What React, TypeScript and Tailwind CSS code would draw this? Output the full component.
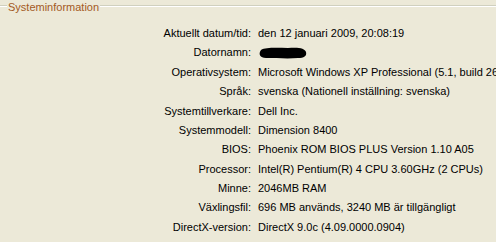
import React from 'react';

const rows: [string, string | null][] = [
  ['Aktuellt datum/tid:', 'den 12 januari 2009, 20:08:19'],
  ['Datornamn:', null],
  ['Operativsystem:', 'Microsoft Windows XP Professional (5.1, build 2600)'],
  ['Språk:', 'svenska (Nationell inställning: svenska)'],
  ['Systemtillverkare:', 'Dell Inc.'],
  ['Systemmodell:', 'Dimension 8400'],
  ['BIOS:', 'Phoenix ROM BIOS PLUS Version 1.10 A05'],
  ['Processor:', 'Intel(R) Pentium(R) 4 CPU 3.60GHz (2 CPUs)'],
  ['Minne:', '2046MB RAM'],
  ['Växlingsfil:', '696 MB används, 3240 MB är tillgängligt'],
  ['DirectX-version:', 'DirectX 9.0c (4.09.0000.0904)'],
];

const Redacted = () => (
  <svg width="50" height="14" viewBox="0 0 50 14" className="mt-[1px]">
    <path d="M3 4 C8 1 20 2 30 2 C40 1 47 2 48 6 C49 10 46 12 40 12 C30 13 18 12 8 12 C2 12 0 8 3 4 Z" fill="#000" />
  </svg>
);

export default function App() {
  return (
    <div
      className="w-[496px] h-[242px] bg-[#ece9d8] overflow-hidden relative text-[11px] text-black"
      style={{ fontFamily: '"Liberation Sans", Arial, sans-serif' }}
    >
      {/* group box frame */}
      <div className="absolute left-0 right-0 top-[5px] border-t border-[#d0d0bf]" />
      <div className="absolute left-0 right-0 top-[6px] border-t border-white" />
      <div className="relative pl-[7px] -mt-[1px]">
        <span className="bg-[#ece9d8] px-[1px] text-[#a35a24] leading-[13px] inline-block">Systeminformation</span>
      </div>

      <div className="mt-[8px] flex flex-col">
        {rows.map(([label, value]) => (
          <div key={label} className="flex items-center h-[19.4px] whitespace-nowrap">
            <div className="w-[252px] shrink-0 text-right pr-[1px]">{label}</div>
            <div className="pl-[6px]">{value === null ? <Redacted /> : value}</div>
          </div>
        ))}
      </div>
    </div>
  );
}
